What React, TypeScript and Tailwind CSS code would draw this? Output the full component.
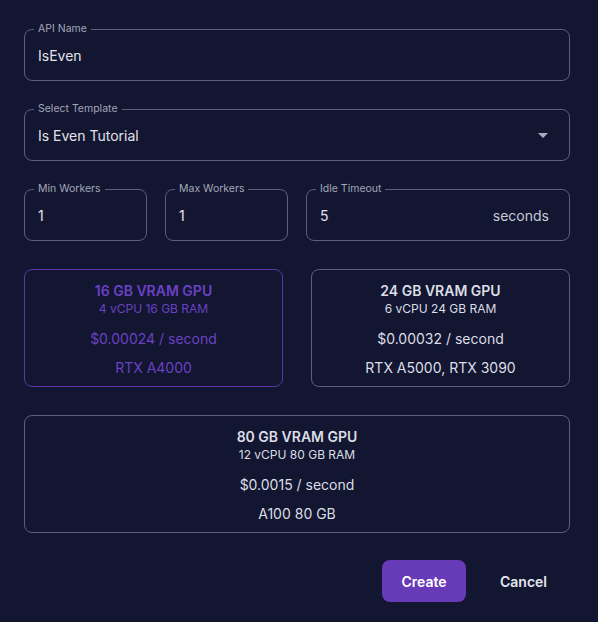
import { ReactNode } from "react";

interface FieldProps {
  label: string;
  children: ReactNode;
  className?: string;
}

const Field = ({ label, children, className = "" }: FieldProps) => (
  <div className={`relative h-[52px] rounded-lg border border-[#5b5f7c] flex items-center pl-[13px] ${className}`}>
    <span className="absolute -top-[8px] left-[9px] px-[4px] bg-[#121631] text-[10.5px] leading-[14px] text-[#a3a6ba]">
      {label}
    </span>
    {children}
  </div>
);

interface GpuCardProps {
  title: string;
  specs: string;
  price: string;
  models: string;
  selected?: boolean;
}

const GpuCard = ({ title, specs, price, models, selected }: GpuCardProps) => (
  <div
    className={`h-[118px] rounded-lg border text-center pt-[11px] ${
      selected ? "border-[#5a36aa] text-[#6b41c4]" : "border-[#5b5f7c] text-[#dcdde5]"
    }`}
  >
    <p className="text-[14px] leading-5 font-semibold">{title}</p>
    <p className="text-[12px] leading-4">{specs}</p>
    <p className="text-[14px] leading-5 mt-3">{price}</p>
    <p className="text-[14px] leading-5 mt-[9px]">{models}</p>
  </div>
);

const App = () => {
  return (
    <div className="min-h-screen bg-[#121631] text-[#e2e3ea] font-['Inter','Liberation_Sans',sans-serif] px-6 pt-[29px]">
      <div className="w-[546px]">
        <Field label="API Name">
          <span className="text-[14px]">IsEven</span>
        </Field>

        <Field label="Select Template" className="mt-[28px] pr-[20px] justify-between">
          <span className="text-[14px]">Is Even Tutorial</span>
          <svg width="10" height="5" viewBox="0 0 10 5" className="mr-[1px]">
            <path d="M0 0 L10 0 L5 5 Z" fill="#a9acbf" />
          </svg>
        </Field>

        <div className="grid grid-cols-[123px_123px_1fr] gap-[18px] mt-[28px]">
          <Field label="Min Workers">
            <span className="text-[14px]">1</span>
          </Field>
          <Field label="Max Workers">
            <span className="text-[14px]">1</span>
          </Field>
          <Field label="Idle Timeout" className="justify-between pr-[20px]">
            <span className="text-[14px]">5</span>
            <span className="text-[14px] text-[#c9cad6]">seconds</span>
          </Field>
        </div>

        <div className="grid grid-cols-2 gap-[28px] mt-[28px]">
          <GpuCard title="16 GB VRAM GPU" specs="4 vCPU 16 GB RAM" price="$0.00024 / second" models="RTX A4000" selected />
          <GpuCard title="24 GB VRAM GPU" specs="6 vCPU 24 GB RAM" price="$0.00032 / second" models="RTX A5000, RTX 3090" />
        </div>

        <div className="mt-[28px]">
          <GpuCard title="80 GB VRAM GPU" specs="12 vCPU 80 GB RAM" price="$0.0015 / second" models="A100 80 GB" />
        </div>

        <div className="flex justify-end items-center mt-[27px]">
          <button className="w-[84px] h-[42px] rounded-lg bg-[#673ab7] text-white text-[14px] font-semibold">
            Create
          </button>
          <button className="ml-[34px] mr-[23px] text-[14px] font-semibold text-[#e6e7ee]">Cancel</button>
        </div>
      </div>
    </div>
  );
};

export default App;
